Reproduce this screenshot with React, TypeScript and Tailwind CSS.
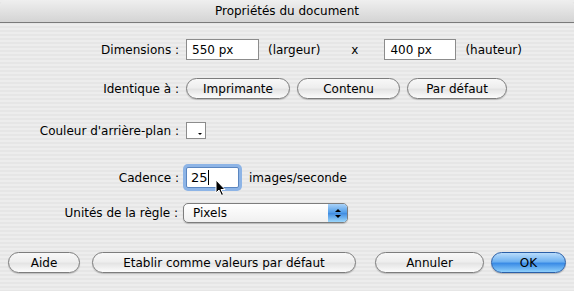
import React from 'react';

const font = { fontFamily: '"DejaVu Sans", "Liberation Sans", sans-serif' };

const AquaButton: React.FC<{ label: string; w: string; primary?: boolean }> = ({ label, w, primary }) => {
  if (primary) {
    return (
      <div
        className={`${w} h-[21px] rounded-full border border-[#2a5fa8] bg-[linear-gradient(to_bottom,#b9dcfb_0%,#6fb2f1_45%,#3b8ce6_55%,#8fd0fb_100%)] flex items-center justify-center text-[12px] text-black shadow-[0_1px_1px_rgba(0,0,0,0.25)]`}
      >
        {label}
      </div>
    );
  }
  return (
    <div
      className={`${w} h-[21px] rounded-full border border-[#7d7d7d] bg-[linear-gradient(to_bottom,#f8f8f8_0%,#eeeeee_45%,#e4e4e4_55%,#fcfcfc_100%)] flex items-center justify-center text-[12px] text-black shadow-[0_1px_1px_rgba(0,0,0,0.2)]`}
    >
      {label}
    </div>
  );
};

const Label: React.FC<{ children: React.ReactNode }> = ({ children }) => (
  <div className="w-[186px] shrink-0 text-right pr-[7px] text-[12px] text-black whitespace-nowrap">{children}</div>
);

export default function App() {
  return (
    <div
      style={font}
      className="w-[574px] h-[291px] overflow-hidden flex flex-col bg-[repeating-linear-gradient(to_bottom,#ededed_0px,#ededed_2px,#e6e6e6_2px,#e6e6e6_4px)] text-black"
    >
      {/* title bar */}
      <div className="h-[23px] shrink-0 rounded-t-[6px] border-b border-[#7a7a7a] bg-[linear-gradient(to_bottom,#efefef,#d4d4d4)] flex items-center justify-center text-[12px]">
        Propriétés du document
      </div>

      {/* dimensions */}
      <div className="mt-[16px] h-[21px] flex items-center">
        <Label>Dimensions :</Label>
        <div className="w-[73px] h-[21px] border border-[#8c8c8c] bg-white px-[5px] flex items-center text-[12px]">550 px</div>
        <div className="ml-[9px] text-[12px]">(largeur)</div>
        <div className="ml-[31px] text-[12px]">x</div>
        <div className="ml-[26px] w-[72px] h-[21px] border border-[#8c8c8c] bg-white px-[5px] flex items-center text-[12px]">400 px</div>
        <div className="ml-[9px] text-[12px]">(hauteur)</div>
      </div>

      {/* identique */}
      <div className="mt-[18px] h-[21px] flex items-center">
        <Label>Identique à :</Label>
        <AquaButton label="Imprimante" w="w-[104px]" />
        <div className="ml-[7px]">
          <AquaButton label="Contenu" w="w-[103px]" />
        </div>
        <div className="ml-[7px]">
          <AquaButton label="Par défaut" w="w-[100px]" />
        </div>
      </div>

      {/* couleur */}
      <div className="mt-[23px] h-[17px] flex items-center">
        <Label>Couleur d'arrière-plan :</Label>
        <div className="relative w-[20px] h-[17px] border border-[#8c8c8c] bg-white">
          <div className="absolute right-[3px] bottom-[3px] w-0 h-0 border-l-[2px] border-r-[2px] border-t-[2px] border-l-transparent border-r-transparent border-t-black" />
        </div>
      </div>

      {/* cadence */}
      <div className="mt-[28px] h-[21px] flex items-center relative">
        <Label>Cadence :</Label>
        <div className="w-[53px] h-[21px] border border-[#5b86c0] bg-white px-[4px] flex items-center text-[13px] shadow-[0_0_0_3px_#8db4e6] rounded-[2px]">
          25<span className="inline-block w-px h-[15px] bg-black" />
        </div>
        <div className="ml-[10px] text-[12px]">images/seconde</div>
        <svg className="absolute left-[215px] top-[12px]" width="12" height="18" viewBox="0 0 12 18">
          <path d="M1 1 L1 14 L4 11 L6.5 16.5 L8.5 15.5 L6 10.5 L10 10.5 Z" fill="black" stroke="white" strokeWidth="1" />
        </svg>
      </div>

      {/* unites */}
      <div className="mt-[15px] h-[20px] flex items-center">
        <div className="w-[183px] shrink-0 text-right pr-[5px] text-[12px] whitespace-nowrap">Unités de la règle :</div>
        <div className="w-[165px] h-[20px] rounded-[5px] border border-[#7d7d7d] bg-[linear-gradient(to_bottom,#ffffff,#f0f0f0)] flex items-stretch overflow-hidden shadow-[0_1px_1px_rgba(0,0,0,0.2)]">
          <div className="flex-1 pl-[9px] flex items-center text-[12px]">Pixels</div>
          <div className="w-[19px] bg-[linear-gradient(to_bottom,#a9d2f8,#4c9ae8_50%,#3e8ae0_50%,#9bd6fb)] flex flex-col items-center justify-center gap-[3px]">
            <div className="w-0 h-0 border-l-[3px] border-r-[3px] border-b-[3px] border-l-transparent border-r-transparent border-b-black" />
            <div className="w-0 h-0 border-l-[3px] border-r-[3px] border-t-[3px] border-l-transparent border-r-transparent border-t-black" />
          </div>
        </div>
      </div>

      {/* buttons */}
      <div className="mt-[29px] h-[21px] px-[8px] flex items-center">
        <AquaButton label="Aide" w="w-[73px]" />
        <div className="ml-[12px]">
          <AquaButton label="Etablir comme valeurs par défaut" w="w-[264px]" />
        </div>
        <div className="ml-[19px]">
          <AquaButton label="Annuler" w="w-[109px]" />
        </div>
        <div className="ml-[7px]">
          <AquaButton label="OK" w="w-[75px]" primary />
        </div>
      </div>
    </div>
  );
}
